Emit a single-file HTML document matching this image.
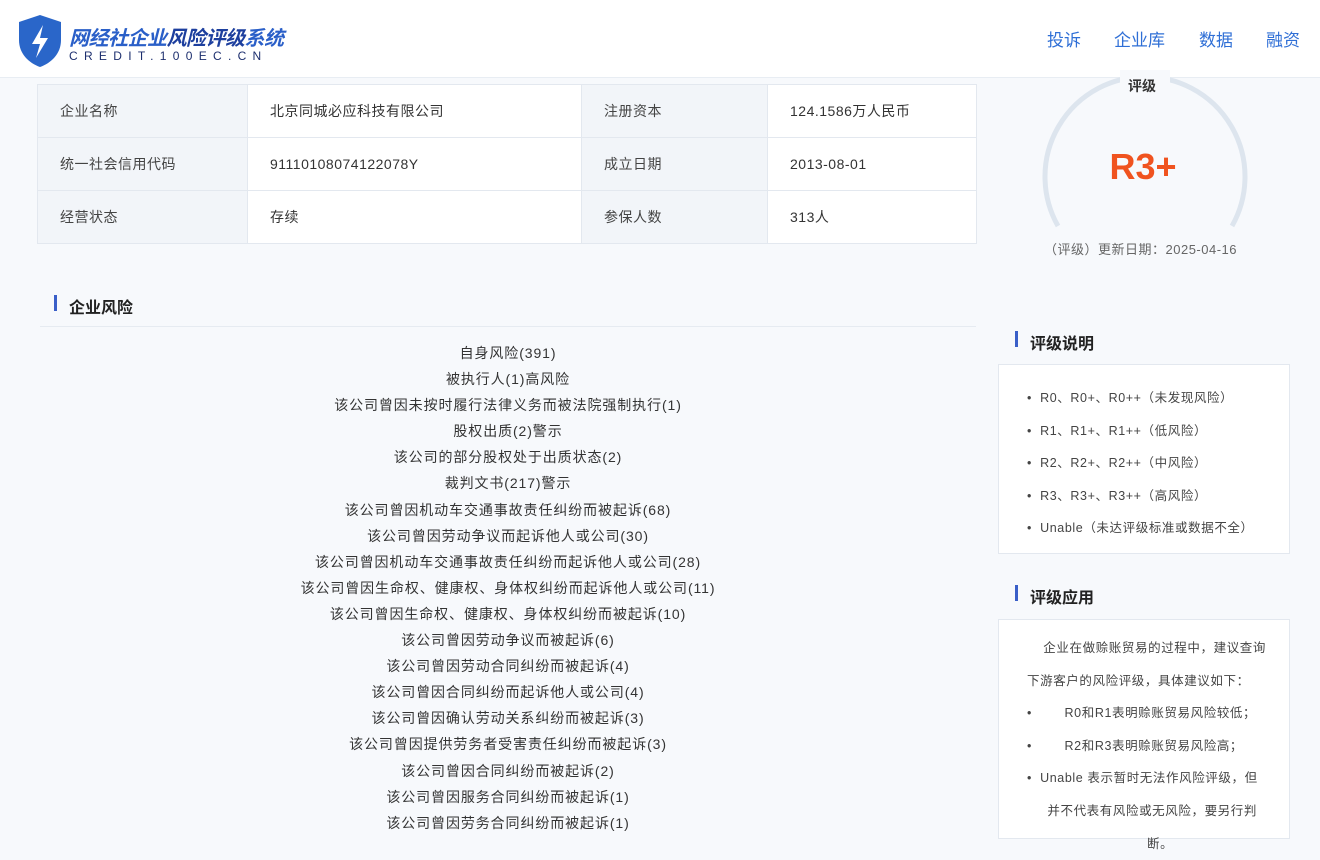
<!DOCTYPE html>
<html><head><meta charset="utf-8"><style>
*{margin:0;padding:0;box-sizing:border-box}
body{width:1320px;height:828px;overflow:hidden;background:#f7f9fc;font-family:"Liberation Sans","Noto Sans CJK SC",sans-serif;color:#333;position:relative}
.hdr{position:absolute;left:0;top:0;width:1320px;height:78px;background:#fff;border-bottom:1px solid #e8edf3}
.nav{position:absolute;top:26px;font-size:17px;color:#2f6fd6}
table{position:absolute;left:37px;top:84px;width:940px;border-collapse:collapse;font-size:14px;background:#fff;letter-spacing:0.5px}
td{border:1px solid #e3e8ef;height:53px;padding-left:22px;color:#333}
td.l{background:#f2f5f9;color:#444}
.sec{position:absolute;font-size:16px;font-weight:bold;color:#222}
.sec:before{content:"";position:absolute;left:-15px;top:1px;width:3px;height:16px;background:#3a5fc8}
.risk{position:absolute;left:40px;top:340px;width:936px;text-align:center;font-size:14px;line-height:26.1px;color:#333;letter-spacing:0.9px}
.box{position:absolute;left:998px;width:292px;background:#fff;border:1px solid #e3e8ef;font-size:12.5px;color:#444;letter-spacing:0.6px;white-space:nowrap}
</style></head><body>
<div class="hdr">
<svg style="position:absolute;left:17px;top:14px" width="46" height="54" viewBox="0 0 46 54"><path d="M23 1 L44 8 V26 C44 40 34 49 23 53 C12 49 2 40 2 26 V8 Z" fill="#2a66c9"/><path d="M26 11 L15 30 H23 L19 44 L31 24 H23 Z" fill="#fff"/></svg>
<div style="position:absolute;left:69px;top:22px;font-size:20px;font-weight:bold;font-style:italic;color:#2a5fc8;letter-spacing:-0.5px">网经社企业<span style="color:#1d3f9e">风险评级</span>系统</div>
<div style="position:absolute;left:69px;top:49px;font-size:12px;letter-spacing:6.3px;color:#1d2f6e">CREDIT.100EC.CN</div>
<span class="nav" style="left:1047px">投诉</span>
<span class="nav" style="left:1114px">企业库</span>
<span class="nav" style="left:1199px">数据</span>
<span class="nav" style="left:1266px">融资</span>
</div>
<table>
<tr><td class="l" style="width:210px">企业名称</td><td style="width:334px">北京同城必应科技有限公司</td><td class="l" style="width:186px">注册资本</td><td>124.1586万人民币</td></tr>
<tr><td class="l">统一社会信用代码</td><td>91110108074122078Y</td><td class="l">成立日期</td><td>2013-08-01</td></tr>
<tr><td class="l">经营状态</td><td>存续</td><td class="l">参保人数</td><td>313人</td></tr>
</table>
<div class="sec" style="left:69px;top:294px">企业风险</div>
<div style="position:absolute;left:40px;top:326px;width:936px;height:1px;background:#e6ebf1"></div>
<div class="risk">自身风险(391)<br>被执行人(1)高风险<br>该公司曾因未按时履行法律义务而被法院强制执行(1)<br>股权出质(2)警示<br>该公司的部分股权处于出质状态(2)<br>裁判文书(217)警示<br>该公司曾因机动车交通事故责任纠纷而被起诉(68)<br>该公司曾因劳动争议而起诉他人或公司(30)<br>该公司曾因机动车交通事故责任纠纷而起诉他人或公司(28)<br>该公司曾因生命权、健康权、身体权纠纷而起诉他人或公司(11)<br>该公司曾因生命权、健康权、身体权纠纷而被起诉(10)<br>该公司曾因劳动争议而被起诉(6)<br>该公司曾因劳动合同纠纷而被起诉(4)<br>该公司曾因合同纠纷而起诉他人或公司(4)<br>该公司曾因确认劳动关系纠纷而被起诉(3)<br>该公司曾因提供劳务者受害责任纠纷而被起诉(3)<br>该公司曾因合同纠纷而被起诉(2)<br>该公司曾因服务合同纠纷而被起诉(1)<br>该公司曾因劳务合同纠纷而被起诉(1)</div>
<svg style="position:absolute;left:1030px;top:70px" width="230" height="170" viewBox="0 0 230 170"><path d="M28 156 A100 100 0 1 1 202 156" fill="none" stroke="#dde5ee" stroke-width="5"/><rect x="90" y="0" width="50" height="26" fill="#f7f9fc"/></svg>
<div style="position:absolute;left:1128px;top:76px;font-size:14px;font-weight:bold;color:#333">评级</div>
<div style="position:absolute;left:1090px;top:146px;width:106px;text-align:center;font-size:36px;font-weight:bold;color:#f0531f">R3+</div>
<div style="position:absolute;left:1044px;top:239px;font-size:13px;color:#666;letter-spacing:0.5px">（评级）更新日期：2025-04-16</div>
<div class="sec" style="left:1030px;top:330px">评级说明</div>
<div class="box" style="top:364px;height:190px;padding:17px 0 0 28px;line-height:32.6px">• &nbsp;R0、R0+、R0++（未发现风险）<br>• &nbsp;R1、R1+、R1++（低风险）<br>• &nbsp;R2、R2+、R2++（中风险）<br>• &nbsp;R3、R3+、R3++（高风险）<br>• &nbsp;Unable（未达评级标准或数据不全）</div>
<div class="sec" style="left:1030px;top:584px">评级应用</div>
<div class="box" style="top:619px;height:220px;padding:12px 0 0 28px;line-height:32.6px">&nbsp;&nbsp;&nbsp;&nbsp;企业在做赊账贸易的过程中，建议查询<br>下游客户的风险评级，具体建议如下：<br>• &nbsp;&nbsp;&nbsp;&nbsp;&nbsp;&nbsp;&nbsp;R0和R1表明赊账贸易风险较低；<br>• &nbsp;&nbsp;&nbsp;&nbsp;&nbsp;&nbsp;&nbsp;R2和R3表明赊账贸易风险高；<br>• &nbsp;Unable 表示暂时无法作风险评级，但<br>&nbsp;&nbsp;&nbsp;&nbsp;&nbsp;并不代表有风险或无风险，要另行判<br><span style="padding-left:120px">断。</span></div>
</body></html>
